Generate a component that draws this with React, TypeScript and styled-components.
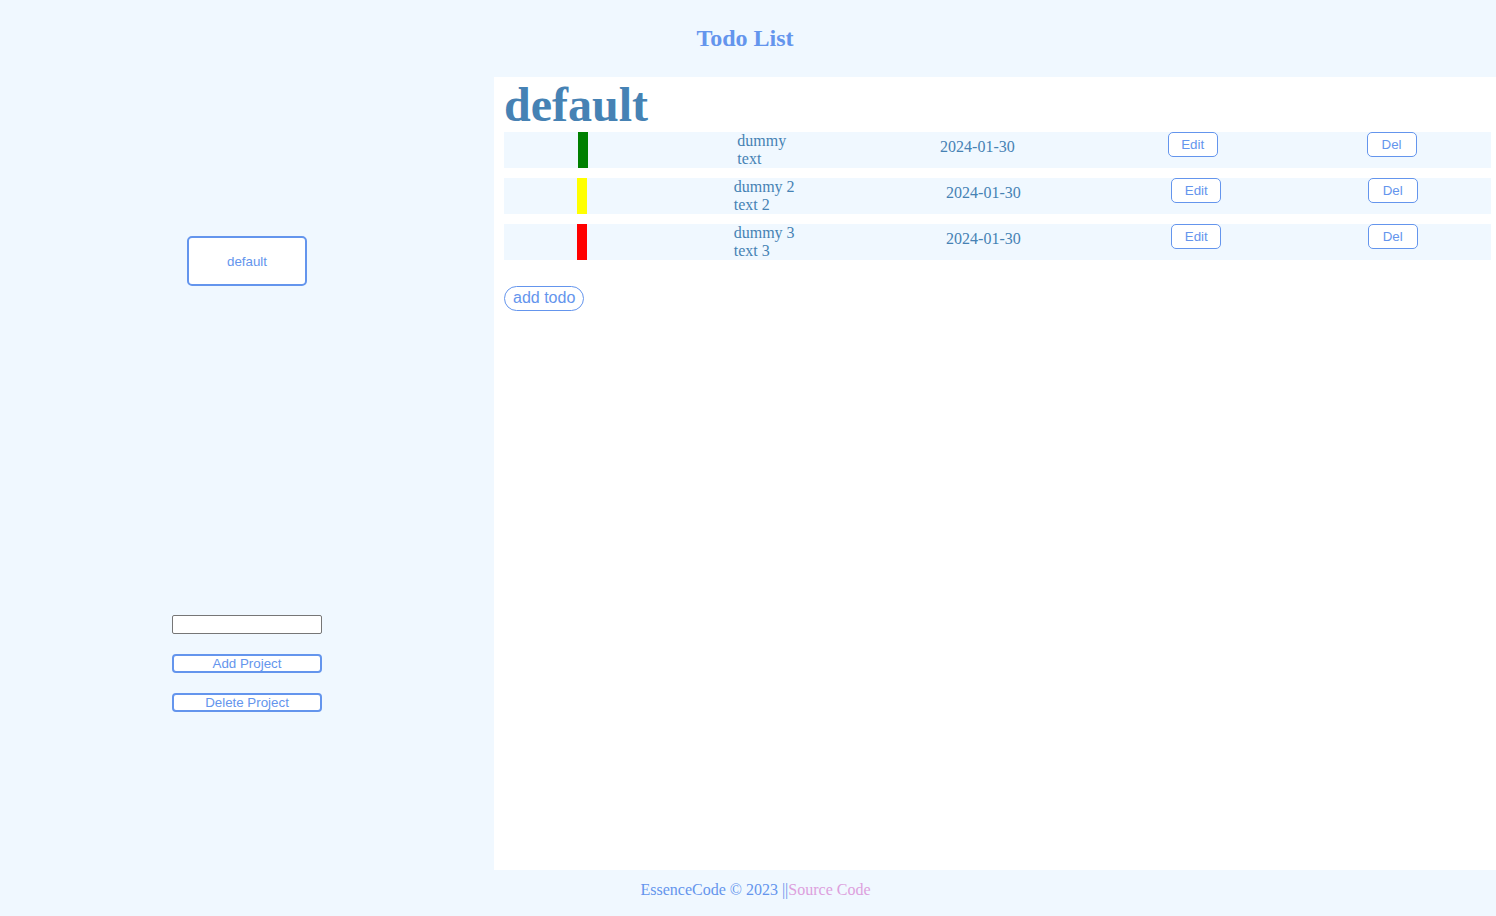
import React from "react";
import styled, { createGlobalStyle } from "styled-components";

const Global = createGlobalStyle`
  html, body { margin: 0; padding: 0; background: #f0f8ff; }
  * { box-sizing: border-box; }
`;

const Page = styled.div`
  display: grid;
  grid-template-rows: 77px 793px 46px;
  height: 916px;
  font-family: "Liberation Serif", "Times New Roman", serif;
`;

const Header = styled.header`
  display: flex;
  align-items: center;
  justify-content: center;
  padding-right: 6px;
`;

const Title = styled.h1`
  margin: 0;
  font-size: 24px;
  font-weight: bold;
  color: #6495ed;
`;

const Content = styled.div`
  display: grid;
  grid-template-columns: 494px 1fr;
  min-height: 0;
`;

const Sidebar = styled.aside`
  display: flex;
  flex-direction: column;
  justify-content: space-between;
  align-items: center;
  padding: 159px 0 158px;
`;

const ProjectList = styled.div`
  display: flex;
  flex-direction: column;
  align-items: center;
`;

const ProjectButton = styled.button`
  width: 120px;
  height: 50px;
  background: #fff;
  border: 2px solid #6495ed;
  border-radius: 5px;
  color: #6495ed;
  font-family: "Liberation Sans", Arial, sans-serif;
  font-size: 13.33px;
  padding: 0;
`;

const ProjectForm = styled.div`
  display: flex;
  flex-direction: column;
  align-items: center;
  gap: 20px;
  padding-top: 4px;
`;

const ProjectInput = styled.input`
  width: 150px;
  height: 19px;
  border: 1px solid #767676;
  border-radius: 2px;
  background: #fff;
  padding: 0 2px;
  font-size: 13.33px;
`;

const FormButton = styled.button`
  width: 150px;
  height: 19px;
  background: #fff;
  border: 2px solid #6495ed;
  border-radius: 4px;
  color: #6495ed;
  font-family: "Liberation Sans", Arial, sans-serif;
  font-size: 13.33px;
  line-height: 15px;
  padding: 0;
`;

const Main = styled.main`
  background: #fff;
  padding: 0 5px 0 10px;
  display: flex;
  flex-direction: column;
`;

const ProjectTitle = styled.h2`
  margin: 0;
  font-size: 48px;
  font-weight: bold;
  color: #4682b4;
  line-height: 55px;
`;

const TodoList = styled.div`
  display: flex;
  flex-direction: column;
  gap: 10px;
`;

const TodoRow = styled.div`
  display: flex;
  justify-content: space-around;
  align-items: stretch;
  background: #f0f8ff;
  height: 36px;
`;

const Priority = styled.div<{ $color: string }>`
  width: 10px;
  background: ${(p) => p.$color};
`;

const TodoText = styled.div`
  display: flex;
  flex-direction: column;
  color: #4682b4;
  font-size: 16px;
  line-height: 18px;
  padding-right: 5px;
`;

const TodoDate = styled.div`
  color: #4682b4;
  font-size: 16px;
  line-height: 18px;
  margin-top: 6px;
  padding-right: 4px;
`;

const RowButton = styled.button`
  align-self: flex-start;
  width: 50px;
  height: 25px;
  background: #fff;
  border: 1px solid #6495ed;
  border-radius: 5px;
  color: #6495ed;
  font-family: "Liberation Sans", Arial, sans-serif;
  font-size: 13.33px;
  padding: 0;
`;

const AddTodo = styled.button`
  align-self: flex-start;
  margin-top: 26px;
  height: 25px;
  padding: 0 8px 2px;
  background: #fff;
  border: 1px solid #6495ed;
  border-radius: 13px;
  color: #6495ed;
  font-family: "Liberation Sans", Arial, sans-serif;
  font-size: 16px;
  line-height: 18px;
`;

const Footer = styled.footer`
  display: flex;
  justify-content: center;
  align-items: flex-start;
  padding-top: 11px;
  padding-left: 15px;
  font-size: 16px;
  color: #6495ed;
`;

const SourceLink = styled.a`
  color: #dda0dd;
  text-decoration: none;
`;

const todos = [
  { title: "dummy", desc: "text", date: "2024-01-30", color: "#008000" },
  { title: "dummy 2", desc: "text 2", date: "2024-01-30", color: "#ffff00" },
  { title: "dummy 3", desc: "text 3", date: "2024-01-30", color: "#ff0000" },
];

export default function App() {
  return (
    <>
      <Global />
      <Page>
        <Header>
          <Title>Todo List</Title>
        </Header>
        <Content>
          <Sidebar>
            <ProjectList>
              <ProjectButton>default</ProjectButton>
            </ProjectList>
            <ProjectForm>
              <ProjectInput type="text" />
              <FormButton>Add Project</FormButton>
              <FormButton>Delete Project</FormButton>
            </ProjectForm>
          </Sidebar>
          <Main>
            <ProjectTitle>default</ProjectTitle>
            <TodoList>
              {todos.map((t, i) => (
                <TodoRow key={i}>
                  <Priority $color={t.color} />
                  <TodoText>
                    <span>{t.title}</span>
                    <span>{t.desc}</span>
                  </TodoText>
                  <TodoDate>{t.date}</TodoDate>
                  <RowButton>Edit</RowButton>
                  <RowButton>Del</RowButton>
                </TodoRow>
              ))}
            </TodoList>
            <AddTodo>add todo</AddTodo>
          </Main>
        </Content>
        <Footer>
          <span>EssenceCode © 2023 ||</span>
          <SourceLink href="#">Source Code</SourceLink>
        </Footer>
      </Page>
    </>
  );
}
